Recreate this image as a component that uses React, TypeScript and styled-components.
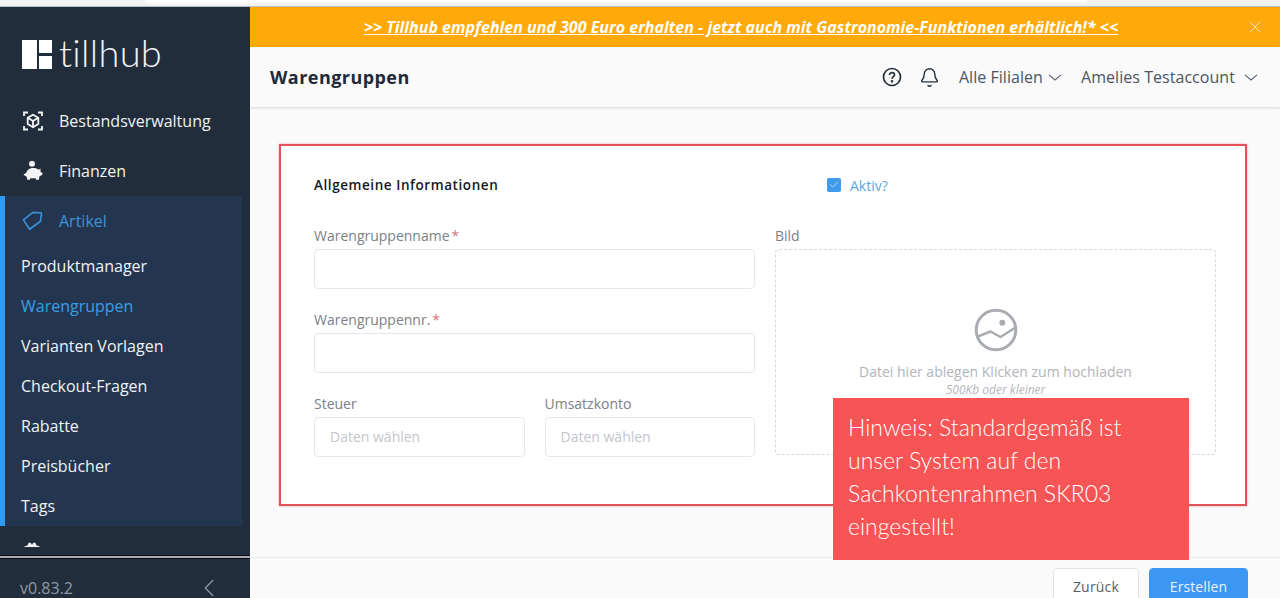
import React from 'react'
import styled, { createGlobalStyle } from 'styled-components'
import { ChevronLeft, Bell, X, Check } from 'lucide-react'

const subItems = ['Produktmanager', 'Warengruppen', 'Varianten Vorlagen', 'Checkout-Fragen', 'Rabatte', 'Preisbücher', 'Tags']

const App = () => {
  return (
    <Page>
      <GlobalStyle />
      <TopStrip>
        <AddressBar />
      </TopStrip>
      <Body>
        <Sidebar>
          <LogoRow>
            <LogoMark>
              <LogoTall />
              <LogoStack>
                <LogoSmall />
                <LogoSmall />
              </LogoStack>
            </LogoMark>
            <LogoText>tillhub</LogoText>
          </LogoRow>
          <Nav>
            <NavItem>
              <NavIcon><StockIcon /></NavIcon>
              Bestandsverwaltung
            </NavItem>
            <NavItem>
              <NavIcon><PiggyIcon /></NavIcon>
              Finanzen
            </NavItem>
            <NavGroup>
              <NavItem $active $short>
                <NavIcon><TagIcon /></NavIcon>
                Artikel
              </NavItem>
              <SubList>
                {subItems.map((item) => (
                  <SubItem key={item} $active={item === 'Warengruppen'}>{item}</SubItem>
                ))}
              </SubList>
            </NavGroup>
            <ClippedIcon>
              <svg width="16" height="5" viewBox="0 0 16 5" fill="#f4f5f6">
                <path d="M0 5C1 4 2.500 3.600 3.500 3.500C4 1.500 4.800 0.500 5.700 0.500C6.600 0.500 7.400 1.500 8 3C8.600 1.500 9.400 0.500 10.300 0.500C11.200 0.500 12 1.500 12.500 3.500C13.500 3.600 15 4 16 5Z" />
              </svg>
            </ClippedIcon>
          </Nav>
          <SideDivider />
          <VersionRow>
            <Version>v0.83.2</Version>
            <ChevronLeft size={30} strokeWidth={1} color="#8e98a5" />
          </VersionRow>
        </Sidebar>
        <Main>
          <Banner>
            <BannerText>&gt;&gt; Tillhub empfehlen und 300 Euro erhalten - jetzt auch mit Gastronomie-Funktionen erhältlich!* &lt;&lt;</BannerText>
            <BannerClose><X size={20} strokeWidth={1.2} /></BannerClose>
          </Banner>
          <Header>
            <Title>Warengruppen</Title>
            <HeaderTools>
              <IconGroup>
                <HelpIcon />
                <Bell size={21} strokeWidth={1.6} color="#262f3c" />
              </IconGroup>
              <Picker>Alle Filialen <CaretIcon /></Picker>
              <Picker $wide>Amelies Testaccount <CaretIcon /></Picker>
            </HeaderTools>
          </Header>
          <Content>
            <Card>
              <TitleRow>
                <SectionTitle>Allgemeine Informationen</SectionTitle>
                <ActiveToggle>
                  <CheckBox><Check size={10} strokeWidth={2} color="#cfe6fb" /></CheckBox>
                  Aktiv?
                </ActiveToggle>
              </TitleRow>
              <FormGrid>
                <FieldColumn>
                  <Field>
                    <Label>Warengruppenname<Req>*</Req></Label>
                    <Input />
                  </Field>
                  <Field>
                    <Label>Warengruppennr.<Req>*</Req></Label>
                    <Input />
                  </Field>
                  <HalfRow>
                    <Field>
                      <Label>Steuer</Label>
                      <Input><Placeholder>Daten wählen</Placeholder></Input>
                    </Field>
                    <Field>
                      <Label>Umsatzkonto</Label>
                      <Input><Placeholder>Daten wählen</Placeholder></Input>
                    </Field>
                  </HalfRow>
                </FieldColumn>
                <div>
                  <Label>Bild</Label>
                  <DropZone>
                    <ImageIcon />
                    <DropText>Datei hier ablegen Klicken zum hochladen</DropText>
                    <DropHint>500Kb oder kleiner</DropHint>
                  </DropZone>
                </div>
              </FormGrid>
            </Card>
          </Content>
          <Footer>
            <BackButton>Zurück</BackButton>
            <CreateButton>Erstellen</CreateButton>
          </Footer>
        </Main>
      </Body>
      <Note>
        Hinweis: Standardgemäß ist<br />
        unser System auf den<br />
        Sachkontenrahmen SKR03<br />
        eingestellt!
      </Note>
    </Page>
  )
}

export default App

const StockIcon = () => (
  <svg width="20" height="20" viewBox="0 0 20 20" fill="none" stroke="#f4f5f6" strokeWidth="1.800">
    <path d="M1 5V1.500H5M15 1.500H19V5M19 15V18.500H15M5 18.500H1V15" />
    <path d="M10 3.800L15.300 6.800V13L10 16.200L4.700 13V6.800Z" />
    <path d="M4.700 6.800L10 10L15.300 6.800M10 10V16.200" />
  </svg>
)

const PiggyIcon = () => (
  <svg width="20" height="20" viewBox="0 0 20 20" fill="#f4f5f6">
    <circle cx="9" cy="2.800" r="3" />
    <path d="M0.500 13.500L3.300 11.800C4 9 7 7 10 7C12.500 7 14.500 7.600 15.800 8.800L17.500 7.500L17.500 10.800C18.500 11.300 19.500 12 19.800 12.800C19.300 14 18 14.700 16.500 15.300L15.800 18.800H13L12.700 17.300H7.300L7 18.800H4.300L3.700 15.800C2.500 15.200 1.300 14.500 0.500 13.500Z" />
  </svg>
)

const TagIcon = () => (
  <svg width="22" height="22" viewBox="0 0 22 22" fill="none" stroke="#3a8fd6" strokeWidth="1.800" strokeLinejoin="round">
    <path d="M1.500 9.800L11.500 2L19.500 2.500C20.200 2.600 20.500 3 20.400 3.700L19.300 11.300L7.900 19.700Z" />
  </svg>
)

const HelpIcon = () => (
  <svg width="20" height="20" viewBox="0 0 20 20" fill="none" stroke="#262f3c" strokeWidth="1.700">
    <circle cx="10" cy="10" r="8.500" />
    <path d="M7.500 8C7.500 6.500 8.700 5.700 10 5.700C11.400 5.700 12.500 6.600 12.500 7.900C12.500 9.600 10 9.800 10 11.700" />
    <circle cx="10" cy="14.300" r="0.500" fill="#262f3c" />
  </svg>
)

const CaretIcon = () => (
  <svg width="14" height="7" viewBox="0 0 14 7" fill="none" stroke="#5b6370" strokeWidth="1.100">
    <path d="M1 0.800L7 6L13 0.800" />
  </svg>
)

const ImageIcon = () => (
  <svg width="44" height="44" viewBox="0 0 44 44" fill="none" stroke="#a9acb1" strokeWidth="3" strokeLinejoin="round">
    <circle cx="22" cy="22" r="19.800" />
    <path d="M2.500 29L16.500 23.500L26.500 29L41.500 19.500" strokeWidth="2.500" />
    <circle cx="28.300" cy="14.700" r="3" fill="#a9acb1" stroke="none" />
  </svg>
)

const GlobalStyle = createGlobalStyle`
  html, body {
    margin: 0;
    padding: 0;
    background: #fafafa;
    font-family: "Open Sans", "Liberation Sans", sans-serif;
  }
`

const Page = styled.div`
  position: relative;
  width: 1280px;
  height: 598px;
  overflow: hidden;
  display: flex;
  flex-direction: column;
`
const TopStrip = styled.div`
  height: 6px;
  flex: none;
  padding-left: 145px;
  background: #f3f3f3;
  border-bottom: 1px solid #b9bcc0;
`
const AddressBar = styled.div`
  width: 942px;
  height: 3px;
  background: #fff;
  border-radius: 0 0 3px 3px;
`
const Body = styled.div`
  flex: 1;
  min-height: 0;
  display: flex;
`
const Sidebar = styled.aside`
  width: 250px;
  flex: none;
  display: flex;
  flex-direction: column;
  background: #222d3b;
  color: #f1f2f3;
`
const LogoRow = styled.div`
  height: 89px;
  flex: none;
  box-sizing: border-box;
  padding: 33px 0 0 22px;
  display: flex;
  align-items: flex-start;
  gap: 7px;
`
const LogoMark = styled.div`
  display: flex;
  gap: 2px;
  height: 29px;
`
const LogoTall = styled.div`
  width: 15px;
  background: #fff;
`
const LogoStack = styled.div`
  display: flex;
  flex-direction: column;
  justify-content: space-between;
`
const LogoSmall = styled.div`
  width: 13px;
  height: 13px;
  background: #fff;
`
const LogoText = styled.div`
  font-family: "Lato", sans-serif;
  font-weight: 300;
  font-size: 38px;
  line-height: 24px;
  height: 24px;
  letter-spacing: 0.3px;
`
const Nav = styled.nav`
  flex: 1;
  min-height: 0;
  overflow: hidden;
`
const NavItem = styled.div<{ $active?: boolean; $short?: boolean }>`
  height: 50px;
  display: flex;
  align-items: center;
  gap: 16px;
  padding-left: ${(p) => (p.$short ? '17px' : '22px')};
  font-size: 16px;
  font-weight: 500;
  color: ${(p) => (p.$active ? '#3c93d8' : '#f1f2f3')};
`
const NavIcon = styled.span`
  width: 21px;
  display: flex;
  justify-content: center;
`
const NavGroup = styled.div`
  width: 242px;
  height: 330px;
  box-sizing: border-box;
  background: #24364f;
  border-left: 5px solid #2f9cf3;
`
const SubList = styled.div`
  padding-top: 0;
`
const SubItem = styled.div<{ $active?: boolean }>`
  height: 40px;
  display: flex;
  align-items: center;
  padding-left: 16px;
  font-size: 16px;
  font-weight: 500;
  color: ${(p) => (p.$active ? '#3a9ee8' : '#f1f2f3')};
`
const ClippedIcon = styled.div`
  padding: 16px 0 0 24px;
  height: 5px;
  display: flex;
`
const SideDivider = styled.div`
  height: 2px;
  flex: none;
  background: #a6a9b0;
  border-top: 1px solid #0d0f14;
  border-bottom: 1px solid #0d0f14;
`
const VersionRow = styled.div`
  height: 39px;
  flex: none;
  box-sizing: border-box;
  padding: 19px 26px 0 20px;
  display: flex;
  align-items: center;
  justify-content: space-between;
`
const Version = styled.span`
  font-size: 16px;
  color: #8e98a5;
`
const Main = styled.main`
  flex: 1;
  min-width: 0;
  display: flex;
  flex-direction: column;
`
const Banner = styled.div`
  height: 40px;
  flex: none;
  display: flex;
  align-items: center;
  background: #ffa90a;
  color: #fff;
`
const BannerText = styled.a`
  flex: 1;
  padding-left: 2px;
  text-align: center;
  font-size: 16px;
  font-weight: 700;
  font-style: italic;
  text-decoration: underline;
`
const BannerClose = styled.span`
  width: 50px;
  display: flex;
  justify-content: center;
  color: #ffe3b3;
`
const Header = styled.header`
  height: 60px;
  flex: none;
  position: relative;
  box-sizing: border-box;
  padding: 0 22px 0 20px;
  display: flex;
  align-items: center;
  justify-content: space-between;
  background: #fafafa;
  box-shadow: 0 1px 3px rgba(0, 0, 0, 0.14);
`
const Title = styled.h1`
  margin: 0;
  font-size: 18px;
  font-weight: 700;
  letter-spacing: 0.45px;
  color: #1f2937;
`
const HeaderTools = styled.div`
  display: flex;
  align-items: center;
  gap: 19px;
`
const IconGroup = styled.div`
  display: flex;
  align-items: center;
  gap: 17px;
`
const Picker = styled.div<{ $wide?: boolean }>`
  display: flex;
  align-items: center;
  gap: ${(p) => (p.$wide ? '9px' : '5px')};
  font-size: 16px;
  letter-spacing: 0.05px;
  color: #4b5563;
`
const Content = styled.div`
  flex: 1;
  min-height: 0;
  padding: 37px 33px 0 29px;
  background: #fafafa;
`
const Card = styled.section`
  height: 362px;
  box-sizing: border-box;
  padding: 25px 30px 0 33px;
  background: #fff;
  border: 2px solid #e5525a;
  box-shadow: 0 0 2px rgba(229, 82, 90, 0.5);
`
const TitleRow = styled.div`
  height: 28px;
  display: grid;
  grid-template-columns: 461px 1fr;
  align-items: center;
`
const SectionTitle = styled.h2`
  margin: 0;
  font-size: 13.500px;
  font-weight: 600;
  letter-spacing: 0.57px;
  color: #14181f;
`
const ActiveToggle = styled.label`
  display: flex;
  align-items: center;
  gap: 9px;
  margin-left: 52px;
  font-size: 14px;
  color: #5ba6e4;
`
const CheckBox = styled.span`
  width: 14px;
  height: 14px;
  border-radius: 2px;
  display: flex;
  align-items: center;
  justify-content: center;
  background: #3f9bec;
`
const FormGrid = styled.div`
  margin-top: 26px;
  display: grid;
  grid-template-columns: 441px 441px;
  column-gap: 20px;
`
const FieldColumn = styled.div`
  display: flex;
  flex-direction: column;
  gap: 20px;
`
const Field = styled.div`
  flex: 1;
  min-width: 0;
`
const HalfRow = styled.div`
  display: flex;
  gap: 20px;
`
const Label = styled.div`
  height: 24px;
  line-height: 22px;
  font-size: 14px;
  color: #7c8087;
`
const Req = styled.span`
  margin-left: 2px;
  color: #d9747f;
`
const Input = styled.div`
  height: 40px;
  box-sizing: border-box;
  padding: 0 15px 2px;
  display: flex;
  align-items: center;
  background: #fff;
  border: 1px solid #e6e8eb;
  border-radius: 4px;
`
const Placeholder = styled.span`
  font-size: 14px;
  color: #c3c6cc;
`
const DropZone = styled.div`
  height: 206px;
  box-sizing: border-box;
  padding-top: 58px;
  display: flex;
  flex-direction: column;
  align-items: center;
  background: #fff;
  border: 1px dashed #d5d7da;
  border-radius: 4px;
`
const DropText = styled.div`
  margin-top: 10px;
  font-size: 14px;
  color: #b3b5b9;
`
const DropHint = styled.div`
  font-size: 12px;
  font-style: italic;
  color: #b3b5b9;
`
const Footer = styled.footer`
  height: 41px;
  flex: none;
  box-sizing: border-box;
  padding: 10px 32px 0 0;
  display: flex;
  justify-content: flex-end;
  gap: 10px;
  background: #fafafa;
  border-top: 1px solid #ebecee;
`
const BackButton = styled.button`
  width: 86px;
  height: 42px;
  padding: 0 0 6px;
  font: inherit;
  font-size: 14px;
  letter-spacing: 0.2px;
  color: #5a5f66;
  background: #fff;
  border: 1px solid #e2e4e7;
  border-radius: 4px;
`
const CreateButton = styled.button`
  width: 99px;
  height: 42px;
  padding: 0 0 6px;
  font: inherit;
  font-size: 14px;
  letter-spacing: 0.1px;
  color: #eaf4fe;
  background: #3b97f3;
  border: 1px solid #3b97f3;
  border-radius: 4px;
`
const Note = styled.div`
  position: absolute;
  left: 833px;
  top: 398px;
  width: 356px;
  height: 162px;
  box-sizing: border-box;
  padding: 13px 0 0 15px;
  background: #f65455;
  color: #fff;
  font-family: "Lato", sans-serif;
  font-weight: 300;
  font-size: 23px;
  line-height: 33px;
  white-space: nowrap;
`
